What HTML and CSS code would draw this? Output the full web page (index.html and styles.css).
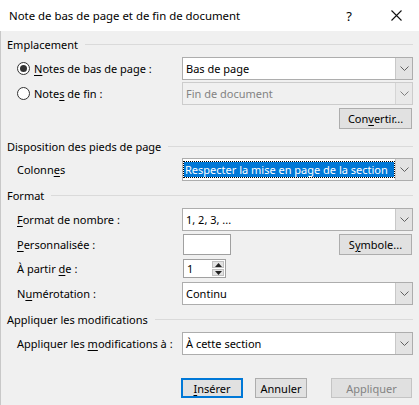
FILE: index.html
```html
<!DOCTYPE html>
<html lang="fr">
<head>
<meta charset="utf-8">
<title>Note de bas de page et de fin de document</title>
<link rel="stylesheet" href="styles.css">
</head>
<body>
<div class="dialog">
  <div class="titlebar">
    <span class="title">Note de bas de page et de fin de document</span>
    <span class="help">?</span>
    <span class="close"><svg width="11" height="11" viewBox="0 0 11 11"><path d="M0.5 0.5 L10.5 10.5 M10.5 0.5 L0.5 10.5" stroke="#111" stroke-width="1.1" fill="none"/></svg></span>
  </div>
  <div class="content">
    <div class="group g1"><span>Emplacement</span><i class="rule"></i></div>
    <div class="row r-combo1">
      <label class="lbl radio-lbl"><span class="radio checked"></span><span><u>N</u>otes de bas de page :</span></label>
      <div class="combo"><span class="val">Bas de page</span><span class="arrow"><svg width="9" height="5" viewBox="0 0 9 5"><path d="M0.5 0.5 L4.5 4.5 L8.5 0.5" stroke="#606060" fill="none"/></svg></span></div>
    </div>
    <div class="row r-combo2">
      <label class="lbl radio-lbl"><span class="radio"></span><span>Note<u>s</u> de fin :</span></label>
      <div class="combo disabled"><span class="val">Fin de document</span><span class="arrow"><svg width="9" height="5" viewBox="0 0 9 5"><path d="M0.5 0.5 L4.5 4.5 L8.5 0.5" stroke="#808080" fill="none"/></svg></span></div>
    </div>
    <div class="row r-btn1"><button class="btn">Con<u>v</u>ertir...</button></div>

    <div class="group g2"><span>Disposition des pieds de page</span><i class="rule"></i></div>
    <div class="row r-col">
      <span class="lbl ind"><span>Colonn<u>e</u>s</span></span>
      <div class="combo focus"><span class="val"><span class="sel">Respecter la mise en page de la section</span></span><span class="arrow"><svg width="9" height="5" viewBox="0 0 9 5"><path d="M0.5 0.5 L4.5 4.5 L8.5 0.5" stroke="#606060" fill="none"/></svg></span></div>
    </div>

    <div class="group g3"><span>Format</span><i class="rule"></i></div>
    <div class="row r-fmt">
      <span class="lbl ind"><span><u>F</u>ormat de nombre :</span></span>
      <div class="combo"><span class="val">1, 2, 3, ...</span><span class="arrow"><svg width="9" height="5" viewBox="0 0 9 5"><path d="M0.5 0.5 L4.5 4.5 L8.5 0.5" stroke="#606060" fill="none"/></svg></span></div>
    </div>
    <div class="row r-perso">
      <span class="lbl ind"><span><u>P</u>ersonnalisée :</span></span>
      <div class="ctl-line"><span class="textbox"></span><button class="btn sym">S<u>y</u>mbole...</button></div>
    </div>
    <div class="row r-spin">
      <span class="lbl ind"><span>À partir <u>d</u>e :</span></span>
      <div class="spin"><span class="spin-val">1</span><span class="spin-btns"><span class="sb up"><svg width="7" height="4" viewBox="0 0 7 4"><path d="M0 4 L3.5 0 L7 4 Z" fill="#222"/></svg></span><span class="sb down"><svg width="7" height="4" viewBox="0 0 7 4"><path d="M0 0 L3.5 4 L7 0 Z" fill="#222"/></svg></span></span></div>
    </div>
    <div class="row r-num">
      <span class="lbl ind"><span>N<u>u</u>mérotation :</span></span>
      <div class="combo"><span class="val">Continu</span><span class="arrow"><svg width="9" height="5" viewBox="0 0 9 5"><path d="M0.5 0.5 L4.5 4.5 L8.5 0.5" stroke="#606060" fill="none"/></svg></span></div>
    </div>

    <div class="group g4"><span>Appliquer les modifications</span><i class="rule"></i></div>
    <div class="row r-app">
      <span class="lbl ind"><span>Appliquer les <u>m</u>odifications à :</span></span>
      <div class="combo"><span class="val">À cette section</span><span class="arrow"><svg width="9" height="5" viewBox="0 0 9 5"><path d="M0.5 0.5 L4.5 4.5 L8.5 0.5" stroke="#606060" fill="none"/></svg></span></div>
    </div>

    <div class="footer">
      <button class="btn default"><u>I</u>nsérer</button>
      <button class="btn cancel">Annuler</button>
      <button class="btn apply" disabled>Appliquer</button>
    </div>
  </div>
</div>
</body>
</html>
```

FILE: styles.css
```css
* { box-sizing: border-box; }
html, body { margin: 0; padding: 0; }
body {
  width: 419px;
  height: 405px;
  overflow: hidden;
  background: #f0f0f0;
  font-family: "Noto Sans", "Liberation Sans", sans-serif;
  font-size: 11px;
  color: #000;
}
u { text-decoration: underline; text-underline-offset: 2px; }

.dialog { width: 419px; height: 405px; display: flex; flex-direction: column; }

.titlebar {
  height: 31px;
  background: #fff;
  display: flex;
  align-items: center;
  flex: none;
}
.title { padding-left: 9px; font-size: 11.4px; flex: 1; }
.help { width: 12px; margin-right: 36px; font-size: 13px; text-align: center; }
.close { width: 11px; height: 11px; margin-right: 17px; display: flex; }

.content {
  flex: 1;
  padding: 0 6px 0 7px;
  display: flex;
  flex-direction: column;
  border-left: 1px solid #c8c8c8;
}

.group { display: flex; align-items: center; height: 16px; flex: none; }
.group .rule { flex: 1; height: 1px; background: #dadada; margin-left: 7px; }
.g1 { margin-top: 5px; margin-left: -1px; }
.g2 { margin-top: 9px; margin-left: -1px; }
.g3 { margin-top: 6px; margin-left: -1px; }
.g4 { margin-top: 6px; margin-left: -1px; }

.row { display: flex; align-items: center; flex: none; }
.lbl { width: 174px; flex: none; display: flex; align-items: center; }
.ind { padding-left: 9px; }
.radio-lbl { padding-left: 9px; gap: 4px; }
.radio {
  width: 13px; height: 13px; border-radius: 50%;
  border: 1px solid #333; background: #fff;
  display: flex; align-items: center; justify-content: center;
}
.radio.checked::after {
  content: ""; width: 7px; height: 7px; border-radius: 50%; background: #333;
}

.combo {
  flex: 1;
  height: 23px;
  display: flex;
  border: 1px solid #adadad;
  background: #fff;
}
.combo .val { flex: 1; display: flex; align-items: center; padding-left: 3px; white-space: nowrap; overflow: hidden; }
.combo .arrow {
  width: 17px; flex: none;
  background: #e3e3e3; border-left: 1px solid #c8c8c8;
  display: flex; align-items: center; justify-content: center;
}
.combo.disabled { background: #f0f0f0; border-color: #cccccc; color: #838383; }
.combo.disabled .arrow { background: #e9e9e9; border-left-color: #d5d5d5; }
.combo.focus .val { padding-left: 1px; padding-right: 1px; }
.combo .sel {
  display: block; width: 100%;
  background: #0078d7; color: #fff;
  padding: 0 1px; line-height: 15px;
  outline: 1px dotted #000; outline-offset: 0;
}

.r-combo1 { margin-top: 5px; }
.r-combo2 { margin-top: 2px; }
.r-btn1 { margin-top: 3px; justify-content: flex-end; }
.r-col { margin-top: 4px; }
.r-fmt { margin-top: 5px; }
.r-perso { margin-top: 3px; }
.r-spin { margin-top: 4px; }
.r-num { margin-top: 4px; }
.r-app { margin-top: 5px; }

.btn {
  font: inherit;
  color: #000;
  background: #e1e1e1;
  border: 1px solid #adadad;
  height: 21px;
  padding: 0;
  display: inline-flex; align-items: center; justify-content: center;
}
.r-btn1 .btn { width: 73px; margin-right: 1px; }

.ctl-line { flex: 1; display: flex; align-items: center; justify-content: space-between; }
.textbox { width: 48px; height: 21px; background: #fff; border: 1px solid #a0a0a0; margin-left: 1px; }
.btn.sym { width: 73px; margin-right: 1px; height: 21px; }

.spin {
  margin-left: 1px;
  width: 43px; height: 19px;
  background: #fff; border: 1px solid #a0a0a0;
  display: flex;
}
.spin-val { flex: 1; padding-left: 3px; display: flex; align-items: center; }
.spin-btns { width: 13px; display: flex; flex-direction: column; gap: 1px; padding: 1px 1px 1px 0; }
.sb { flex: 1; background: #e3e3e3; border: 1px solid #c0c0c0; display: flex; align-items: center; justify-content: center; }

.footer { display: flex; justify-content: flex-end; margin-top: 23px; padding-right: 1px; }
.footer .btn { height: 20px; }
.btn.default { width: 62px; border: 2px solid #0078d7; margin-right: 12px; }
.btn.cancel { width: 52px; margin-right: 24px; }
.btn.apply { width: 81px; background: #e0e0e0; border-color: #c4c4c4; color: #838383; }
```
